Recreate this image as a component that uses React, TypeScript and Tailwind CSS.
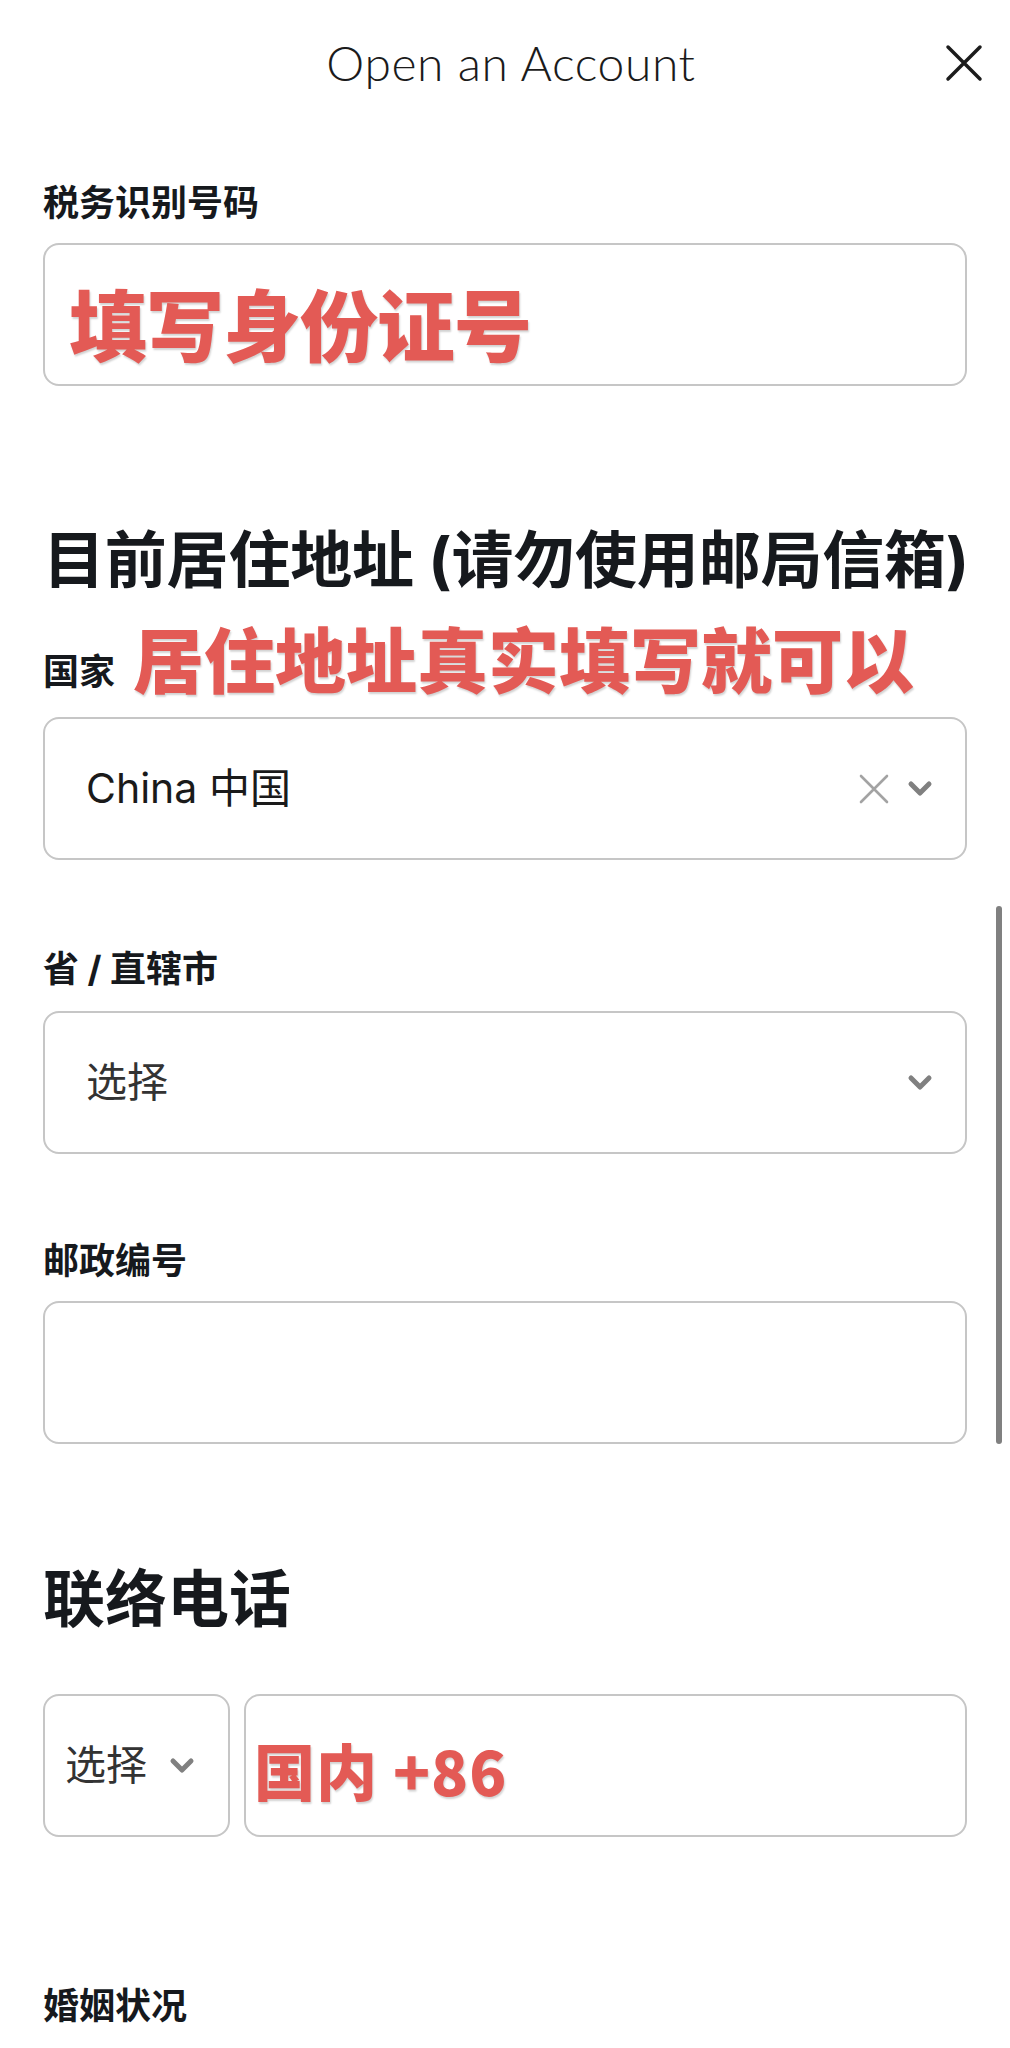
import type { ReactNode } from 'react';

const cjk = "font-['Inter','Noto_Sans_CJK_SC',sans-serif]";

function Chevron() {
  return (
    <svg width="26" height="17" viewBox="0 0 26 17" className="shrink-0">
      <polyline
        points="4,4 13,13 22,4"
        fill="none"
        stroke="#808080"
        strokeWidth="5"
        strokeLinecap="round"
        strokeLinejoin="round"
      />
    </svg>
  );
}

function Label({ children, className = '' }: { children: ReactNode; className?: string }) {
  return (
    <div className={`${cjk} text-[36px] leading-none font-bold text-[#16191d] ${className}`}>
      {children}
    </div>
  );
}

function Heading({ children, className = '' }: { children: ReactNode; className?: string }) {
  return (
    <h2 className={`${cjk} text-[62px] leading-none font-bold text-[#16191d] whitespace-nowrap ${className}`}>
      {children}
    </h2>
  );
}

function Box({ children, className = '' }: { children?: ReactNode; className?: string }) {
  return (
    <div className={`h-[143px] rounded-[16px] border-2 border-[#c6c6c6] bg-white flex items-center ${className}`}>
      {children}
    </div>
  );
}

const red = "font-['Noto_Sans_CJK_SC','Inter',sans-serif] font-black text-[#e35a55] [text-shadow:1px_2px_2px_rgba(0,0,0,0.18)] leading-none";

export default function App() {
  return (
    <div className="relative w-[1010px] min-h-[2048px] bg-white overflow-hidden">
      <header className="grid grid-cols-[1fr_auto_1fr] items-center h-[126px]">
        <div />
        <h1 className="font-['Lato',sans-serif] font-light text-[48px] leading-none tracking-[0.6px] text-[#1b1b1b] pl-[12px]">
          Open an Account
        </h1>
        <div className="flex justify-end pr-[27px]">
          <svg width="38" height="38" viewBox="0 0 38 38">
            <path d="M3 3 L35 35 M35 3 L3 35" stroke="#1c1c1c" strokeWidth="3.5" strokeLinecap="round" />
          </svg>
        </div>
      </header>

      <main className="px-[43px]">
        <Label className="mt-[59px]">税务识别号码</Label>
        <Box className="mt-[22px] pl-[24px] pt-[14px]">
          <span className={`${red} text-[78px] tracking-[-1px]`}>填写身份证号</span>
        </Box>

        <Heading className="mt-[144px] tracking-[-0.2px]">目前居住地址 (请勿使用邮局信箱)</Heading>
        <div className="mt-[29px] flex items-end">
          <Label className="pb-[2px]">国家</Label>
          <span className={`${red} text-[71px] ml-[18px]`}>居住地址真实填写就可以</span>
        </div>
        <Box className="mt-[25px] pl-[41px] pr-[32px]">
          <span className={`${cjk} text-[41px] leading-none text-[#1a1a1a] flex-1`}>China 中国</span>
          <svg width="30" height="30" viewBox="0 0 30 30" className="shrink-0">
            <path d="M2 2 L28 28 M28 2 L2 28" stroke="#a3a3a3" strokeWidth="2.6" strokeLinecap="round" />
          </svg>
          <div className="ml-[18px]">
            <Chevron />
          </div>
        </Box>

        <Label className="mt-[91px]">省 / 直辖市</Label>
        <Box className="mt-[24px] pl-[41px] pr-[32px]">
          <span className={`${cjk} text-[41px] leading-none text-[#333333] flex-1`}>选择</span>
          <Chevron />
        </Box>

        <Label className="mt-[89px]">邮政编号</Label>
        <Box className="mt-[22px]" />

        <Heading className="mt-[125px]">联络电话</Heading>
        <div className="mt-[63px] flex gap-[14px]">
          <Box className="w-[187px] pl-[20px] pr-[33px] justify-between">
            <span className={`${cjk} text-[41px] leading-none text-[#333333]`}>选择</span>
            <Chevron />
          </Box>
          <Box className="flex-1 pl-[8px] pt-[8px]">
            <span className={`${red} text-[61px] tracking-[1px]`}>国内 +86</span>
          </Box>
        </div>

        <Label className="mt-[151px]">婚姻状况</Label>
      </main>

      <div className="absolute right-[8px] top-[906px] h-[538px] w-[6px] rounded-full bg-[#808080]" />
    </div>
  );
}
